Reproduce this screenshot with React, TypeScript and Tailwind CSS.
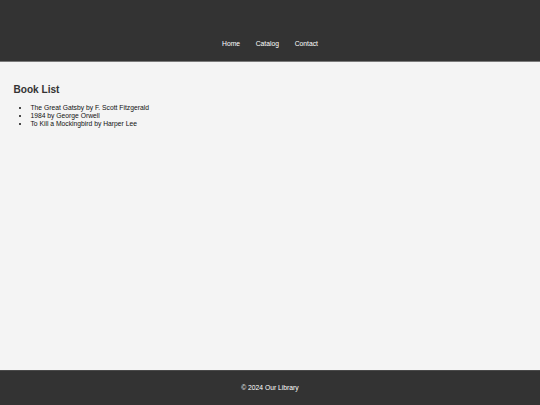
export default function App() {
  return (
    <div className="flex h-[405px] flex-col bg-[#f4f4f4] text-black [font-family:'Liberation_Sans',Arial,sans-serif] text-[6.75px] leading-[1.149]">
      <header className="h-[62px] shrink-0 border-b border-[#7a7a7a] bg-[#333] pt-[40px] text-white">
        <nav className="flex justify-center gap-[15.7px]">
          <a href="#" className="text-white">Home</a>
          <a href="#" className="text-white">Catalog</a>
          <a href="#" className="text-white">Contact</a>
        </nav>
      </header>
      <main className="flex-1 px-[13.5px] pt-[21.5px]">
        <h2 className="text-[10.1px] font-bold leading-[1.149] text-[#333]">Book List</h2>
        <ul className="mt-[9px] list-disc pl-[16.9px] text-[#111]">
          <li>The Great Gatsby by F. Scott Fitzgerald</li>
          <li>1984 by George Orwell</li>
          <li>To Kill a Mockingbird by Harper Lee</li>
        </ul>
      </main>
      <footer className="flex h-[35px] shrink-0 items-center justify-center border-t border-[#4a4a4a] bg-[#333] text-white">
        <p>© 2024 Our Library</p>
      </footer>
    </div>
  );
}
